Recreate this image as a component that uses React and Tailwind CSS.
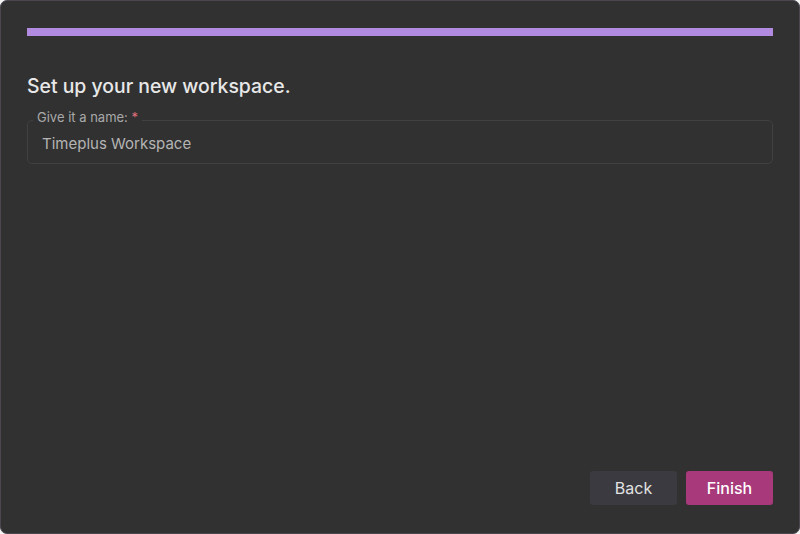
export default function App() {
  return (
    <div className="h-[534px] w-[800px] bg-[#f3f3f3]" style={{ fontFamily: 'Inter, "Noto Sans", sans-serif' }}>
      <div className="flex h-full flex-col rounded-[7px] border border-[#4b4650] bg-[#313131] px-[26px] pt-[27px] pb-[28px]">
        {/* progress */}
        <div className="h-[8px] w-full bg-[#b18be0]" />

        <h1 className="mt-[36px] text-[19.4px] font-medium leading-[28px] text-[#e8e8e8]">Set up your new workspace.</h1>

        <fieldset className="mt-[12px] rounded-[5px] border border-[#414141] px-[14px] pb-[8px]">
          <legend className="relative -top-[3px] ml-[-9px] px-[4px] text-[13px] leading-[16px] text-[#a9a9a9]">
            Give it a name: <span className="text-[#e0707e]">*</span>
          </legend>
          <div className="pt-[5px] text-[15px] leading-[22px] text-[#b4b4b4]">Timeplus Workspace</div>
        </fieldset>

        <div className="flex-1" />

        <div className="flex justify-end gap-[9px]">
          <button className="h-[34px] w-[87px] rounded-[3px] bg-[#3b3a40] text-[16px] font-normal text-[#e2e2e2]">Back</button>
          <button className="h-[34px] w-[87px] rounded-[3px] bg-[#a8397b] text-[16px] font-medium text-white">Finish</button>
        </div>
      </div>
    </div>
  )
}
